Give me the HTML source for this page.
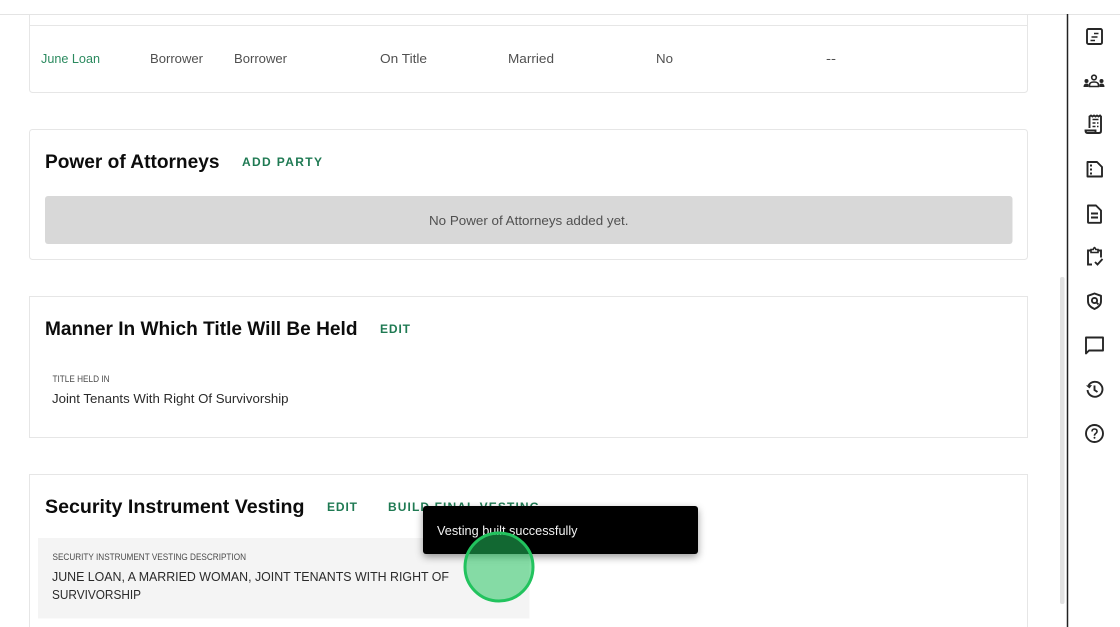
<!DOCTYPE html>
<html><head><meta charset="utf-8"><style>
html,body{margin:0;padding:0;background:#fff;width:1120px;height:627px;overflow:hidden}
svg{display:block}
text{font-family:"Liberation Sans",sans-serif}
.b{font-size:13px;fill:#505050}
.d{font-size:13px;fill:#2a2a2a}
.h{font-size:19px;font-weight:700;fill:#0c0c0c}
.a{font-size:12px;font-weight:700;fill:#1f7a53}
.l{font-size:9px;fill:#4a4a4a}
.c{fill:#fff;stroke:#e6e6e6;stroke-width:1}
.i{fill:none;stroke:#262626;stroke-width:1.9}
.t{fill:none;stroke:#262626;stroke-width:1.6}
.f{fill:#262626;stroke:none}
</style></head><body>
<svg width="1120" height="627" viewBox="0 0 1120 627" xmlns="http://www.w3.org/2000/svg">
<rect x="29.5" y="-10" width="998" height="102.5" rx="3" class="c"/>
<line x1="30" y1="25.5" x2="1028" y2="25.5" stroke="#e6e6e6"/>
<rect x="0" y="0" width="1120" height="14" fill="#fff"/>
<line x1="0" y1="14.5" x2="1120" y2="14.5" stroke="#e4e4e4"/>

<text x="41" y="63" class="b" style="fill:#2b8a5f" textLength="59" lengthAdjust="spacingAndGlyphs">June Loan</text>
<text x="150" y="63" class="b" textLength="53" lengthAdjust="spacingAndGlyphs">Borrower</text>
<text x="234" y="63" class="b" textLength="53" lengthAdjust="spacingAndGlyphs">Borrower</text>
<text x="380" y="63" class="b" textLength="47" lengthAdjust="spacingAndGlyphs">On Title</text>
<text x="508" y="63" class="b" textLength="46" lengthAdjust="spacingAndGlyphs">Married</text>
<text x="656" y="63" class="b" textLength="17" lengthAdjust="spacingAndGlyphs">No</text>
<text x="826" y="63" class="b" textLength="10" lengthAdjust="spacingAndGlyphs">--</text>

<rect x="29.5" y="129.5" width="998" height="130" rx="3" class="c"/>
<text x="45" y="168" class="h" textLength="174.500" lengthAdjust="spacingAndGlyphs">Power of Attorneys</text>
<text x="242" y="166" class="a" textLength="80" lengthAdjust="spacing">ADD PARTY</text>
<rect x="45" y="196" width="967.500" height="48" rx="3" fill="#d8d8d8"/>
<text x="429" y="225" class="b" textLength="199.500" lengthAdjust="spacingAndGlyphs">No Power of Attorneys added yet.</text>

<rect x="29.5" y="296.500" width="998" height="141" class="c"/>
<text x="45" y="335" class="h" textLength="312.500" lengthAdjust="spacingAndGlyphs">Manner In Which Title Will Be Held</text>
<text x="380" y="333" class="a" textLength="30" lengthAdjust="spacing">EDIT</text>
<text x="52.500" y="382" class="l" textLength="57" lengthAdjust="spacingAndGlyphs">TITLE HELD IN</text>
<text x="52" y="403" class="d" textLength="236.500" lengthAdjust="spacingAndGlyphs">Joint Tenants With Right Of Survivorship</text>

<rect x="29.5" y="474.500" width="998" height="170" class="c"/>
<text x="45" y="513" class="h" textLength="259.500" lengthAdjust="spacingAndGlyphs">Security Instrument Vesting</text>
<text x="327" y="511" class="a" textLength="30" lengthAdjust="spacing">EDIT</text>
<text x="388" y="511" class="a" textLength="151" lengthAdjust="spacing">BUILD FINAL VESTING</text>
<rect x="38" y="538" width="491.500" height="80.500" fill="#f4f4f4"/>
<text x="52.500" y="560" class="l" textLength="193.500" lengthAdjust="spacingAndGlyphs">SECURITY INSTRUMENT VESTING DESCRIPTION</text>
<text x="52" y="581" class="d" textLength="397" lengthAdjust="spacingAndGlyphs">JUNE LOAN, A MARRIED WOMAN, JOINT TENANTS WITH RIGHT OF</text>
<text x="52" y="599" class="d" textLength="89" lengthAdjust="spacingAndGlyphs">SURVIVORSHIP</text>

<rect x="1060" y="277" width="4.500" height="327" rx="2" fill="#e2e2e2"/>
<line x1="1067.500" y1="14" x2="1067.500" y2="627" stroke="#222" stroke-width="1.5"/>

<defs><filter id="s" x="-10%" y="-30%" width="120%" height="170%"><feDropShadow dx="0" dy="3" stdDeviation="4" flood-color="#000" flood-opacity=".4"/></filter></defs>
<rect x="423" y="506" width="275" height="48" rx="3" fill="#000" filter="url(#s)"/>
<text x="437" y="535" font-size="13" fill="#f2f2f2" textLength="140.500" lengthAdjust="spacingAndGlyphs">Vesting built successfully</text>
<circle cx="499" cy="567" r="34" fill="#22c55e" fill-opacity=".53" stroke="#22c35e" stroke-width="3"/>

<!-- sidebar icons -->
<rect x="1087" y="29" width="15" height="15" rx="1.500" class="i"/>
<path d="M1094 33.500h4.500M1091.500 37h6M1090.500 40.500h4.500" class="t"/>

<circle cx="1094" cy="77.500" r="2.300" class="t"/>
<path d="M1089.500 86.500v-1.500q0-3 4.500-3t4.500 3v1.500z" class="t"/>
<circle cx="1086.500" cy="81" r="2" class="f"/><circle cx="1101.500" cy="81" r="2" class="f"/>
<path d="M1083.500 87q0-3.500 3-3.500t2 3.500zM1104.500 87q0-3.500-3-3.500t-2 3.500z" class="f"/>

<path d="M1089.500 128v-11.500l1.500-1 1.500 1 1.500-1 1.500 1 1.500-1 1.500 1 1.500-1 1 1v14.500q0 2-2 2h-11.500q-2 0-2-2.500h10v2" class="i"/>
<path d="M1092.500 119.500h6M1092.500 123h3M1097 123h1.500M1092.500 126.500h3M1097 126.500h1.500" class="t"/>

<path d="M1087.500 162h9.500l5 5v9.500h-14.500z" class="i" stroke-linejoin="round"/>
<rect x="1090" y="164.500" width="2" height="2" class="f"/><rect x="1090" y="168.500" width="2" height="2" class="f"/><rect x="1090" y="172.500" width="2" height="2" class="f"/>

<path d="M1088 205.500h8l5 5v11.500q0 .8-.8.8h-11.400q-.8 0-.8-.8z" class="i" stroke-linejoin="round"/>
<path d="M1091 213.500h7M1091 217.500h7" class="i"/>

<path d="M1091 250.500h-3v14h4M1098 250.500h3v7" class="i"/>
<path d="M1091 252.500v-3h2.200q.8-2 1.300-2t1.300 2h2.200v3z" class="t"/>
<path d="M1095 262l2.500 2.500 5-5.500" class="i"/>

<path d="M1094.500 293.500l6.500 2.300v5.500q0 5-6.500 7.700q-6.500-2.700-6.500-7.700v-5.500z" class="i" stroke-linejoin="round"/>
<circle cx="1094.500" cy="300.500" r="2.600" class="i"/>
<path d="M1096.500 302.500l2 2" class="i"/>

<path d="M1086 337.500h17v13h-14l-3 3z" class="i" stroke-linejoin="round"/>

<path d="M1088.500 385.500a7.500 7.500 0 1 1 -1 4.500" class="i"/>
<path d="M1086 385.500l3.500 3 2.500-3.500z" class="f"/>
<path d="M1094.500 385.500v4.500l3 2" class="i"/>

<circle cx="1094.500" cy="433.500" r="8.500" class="i"/>
<path d="M1092 431.500q0-2.500 2.500-2.500t2.500 2.300q0 1.300-1.300 2.200t-1.200 2.200" class="t"/>
<circle cx="1094.500" cy="437.800" r="1" class="f"/>
</svg>
</body></html>
